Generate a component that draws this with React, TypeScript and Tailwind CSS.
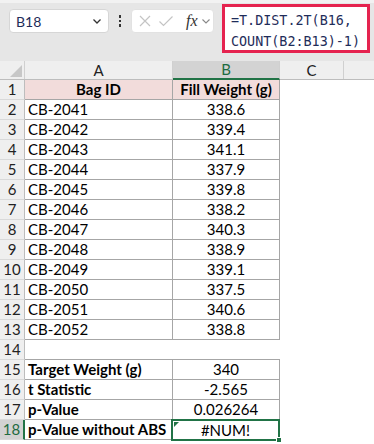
import React from "react";

const rows: [string, string][] = [
    ["CB-2041", "338.6"],
    ["CB-2042", "339.4"],
    ["CB-2043", "341.1"],
    ["CB-2044", "337.9"],
    ["CB-2045", "339.8"],
    ["CB-2046", "338.2"],
    ["CB-2047", "340.3"],
    ["CB-2048", "338.9"],
    ["CB-2049", "339.1"],
    ["CB-2050", "337.5"],
    ["CB-2051", "340.6"],
    ["CB-2052", "338.8"],
];

const stats: [string, string][] = [
    ["Target Weight (g)", "340"],
    ["t Statistic", "-2.565"],
    ["p-Value", "0.026264"],
];

function RowNum({ n, selected }: { n: number; selected?: boolean }) {
    return (
        <div
            className={`w-[25px] shrink-0 flex items-center justify-center border-b border-b-[#d9d9d9] ${
                selected
                    ? "bg-[#d2d2d2] text-[#1e6b41] border-r-2 border-r-[#217346]"
                    : "bg-[#efefef] text-[#222] border-r border-r-[#bdbdbd]"
            }`}
        >
            {n}
        </div>
    );
}

export default function App() {
    return (
        <div className="w-[374px] h-[444px] overflow-hidden bg-white font-['Lato',sans-serif] text-[15px] text-black">
            {/* Formula bar */}
            <div className="h-[61px] bg-[#e6e6e6] border-t-[3px] border-t-[#f2f2f2] flex items-start pl-[9px] pt-[6px]">
                <div className="w-[100px] h-[24px] bg-white rounded-[4px] border border-[#d6d6d6] flex items-center justify-between pl-[6px] pr-[5px] text-[#1f2d5a] text-[14px]">
                    <span>B18</span>
                    <svg width="12" height="12" viewBox="0 0 12 12">
                        <path d="M2.5 4.5 L6 8 L9.5 4.5" stroke="#333" strokeWidth="1.3" fill="none" />
                    </svg>
                </div>
                <div className="h-[24px] w-[22px] flex flex-col items-center justify-center gap-[2px]">
                    <span className="w-[2.5px] h-[2.5px] bg-[#333]" />
                    <span className="w-[2.5px] h-[2.5px] bg-[#333]" />
                    <span className="w-[2.5px] h-[2.5px] bg-[#333]" />
                </div>
                <div className="w-[83px] h-[24px] bg-white rounded-[4px] border border-[#e2e2e2] flex items-center pl-[6px] gap-[6px]">
                    <svg width="14" height="14" viewBox="0 0 14 14">
                        <path d="M2 2 L12 12 M12 2 L2 12" stroke="#c4c4c4" strokeWidth="1.2" fill="none" />
                    </svg>
                    <svg width="16" height="14" viewBox="0 0 16 14">
                        <path d="M1.5 7.5 L5.5 11.5 L14.5 2.5" stroke="#c4c4c4" strokeWidth="1.2" fill="none" />
                    </svg>
                    <span className="font-['Liberation_Serif',serif] italic text-[16px] text-[#333] ml-[6px] leading-none">fx</span>
                    <svg width="10" height="10" viewBox="0 0 10 10" className="-ml-[3px]">
                        <path d="M1.5 3.5 L5 7 L8.5 3.5" stroke="#888" strokeWidth="1.1" fill="none" />
                    </svg>
                </div>
                <div className="ml-[8px] w-[148px] h-[49px] -mt-[5px] bg-white border-[3px] border-[#e5234f] pl-[6px] pt-[3px] font-['DejaVu_Sans_Mono',monospace] text-[13.4px] leading-[21px] text-[#1f2d5a] whitespace-pre">
                    {"=T.DIST.2T(B16,\nCOUNT(B2:B13)-1)"}
                </div>
            </div>

            {/* Column headers */}
            <div className="flex h-[19px] bg-[#efefef] border-b border-b-[#bdbdbd] text-[#222]">
                <div className="w-[25px] shrink-0 border-r border-r-[#d0d0d0] flex items-end justify-end pr-[2px] pb-[2px]">
                    <svg width="12" height="12" viewBox="0 0 12 12">
                        <path d="M12 0 L12 12 L0 12 Z" fill="#c7c7c7" />
                    </svg>
                </div>
                <div className="w-[148px] shrink-0 border-r border-r-[#d0d0d0] flex items-center justify-center">A</div>
                <div className="w-[107px] shrink-0 bg-[#d3d3d3] border-r border-r-[#d0d0d0] border-b-2 border-b-[#217346] -mb-px flex items-center justify-center text-[#1e6b41]">
                    B
                </div>
                <div className="w-[64px] shrink-0 border-r border-r-[#d0d0d0] flex items-center justify-center">C</div>
                <div className="flex-1" />
            </div>

            {/* Row 1 */}
            <div className="flex h-[20px]">
                <RowNum n={1} />
                <div className="w-[148px] shrink-0 bg-[#f2dcdb] border-r border-b border-[#a6a6a6] flex items-center justify-center font-bold">
                    Bag ID
                </div>
                <div className="w-[107px] shrink-0 bg-[#f2dcdb] border-r border-b border-[#a6a6a6] flex items-center justify-center font-bold">
                    Fill Weight (g)
                </div>
            </div>

            {rows.map(([id, w], i) => (
                <div key={id} className="flex h-[20px]">
                    <RowNum n={i + 2} />
                    <div className="w-[148px] shrink-0 border-r border-b border-[#a6a6a6] flex items-center pl-[3px]">{id}</div>
                    <div className="w-[107px] shrink-0 border-r border-b border-[#a6a6a6] flex items-center justify-center">{w}</div>
                </div>
            ))}

            {/* Row 14 */}
            <div className="flex h-[20px]">
                <RowNum n={14} />
                <div className="w-[255px] shrink-0 border-b border-[#a6a6a6]" />
            </div>

            {stats.map(([label, v], i) => (
                <div key={label} className="flex h-[20px]">
                    <RowNum n={i + 15} />
                    <div className="w-[148px] shrink-0 border-r border-b border-[#a6a6a6] flex items-center pl-[3px] font-bold">{label}</div>
                    <div className="w-[107px] shrink-0 border-r border-b border-[#a6a6a6] flex items-center justify-center">{v}</div>
                </div>
            ))}

            {/* Row 18 */}
            <div className="flex h-[20px]">
                <RowNum n={18} selected />
                <div className="w-[147px] shrink-0 border-r border-b border-[#a6a6a6] flex items-center pl-[3px] font-bold">p-Value without ABS</div>
                <div className="relative w-[109px] h-[22px] -mt-px -ml-px shrink-0 border-2 border-[#217346] flex items-center justify-center">
                    <svg width="5" height="5" viewBox="0 0 5 5" className="absolute left-[1px] top-[1px]">
                        <path d="M0 0 L5 0 L0 5 Z" fill="#217346" />
                    </svg>
                    #NUM!
                    <span className="absolute -right-[4px] -bottom-[4px] w-[6px] h-[6px] bg-[#217346] border border-white" />
                </div>
            </div>
        </div>
    );
}
